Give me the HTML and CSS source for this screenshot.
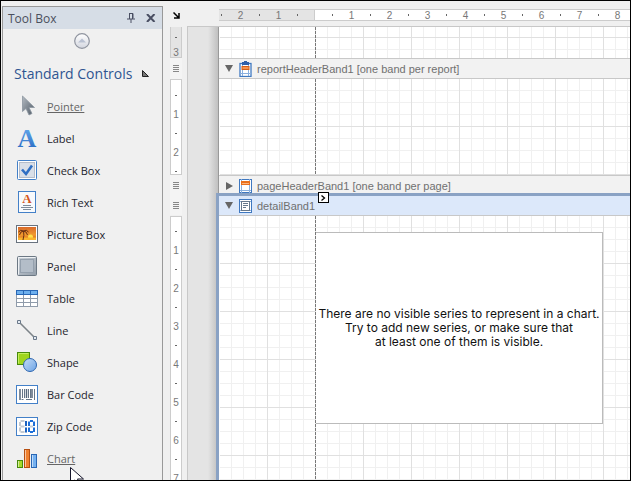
FILE: index.html
```
<!DOCTYPE html>
<html lang="en">
<head>
    <meta charset="UTF-8">
    <meta name="viewport" content="width=device-width, initial-scale=1">
    <title>Report Designer</title>
    <link rel="stylesheet" href="styles.css">
</head>
<body>
    <!-- Tool box -->
    <aside class="toolbox">
        <div class="toolbox-header">
            <span class="toolbox-title">Tool Box</span>
            <button class="icon-button" aria-label="Auto hide">
                <svg width="8" height="10" viewBox="0 0 8 10"><path d="M2 .5h4v5M2.500 0v6M0 6h8M4 6v4M5.500 1v5" fill="none" stroke="#4a4f63"/></svg>
            </button>
            <button class="icon-button" aria-label="Close">
                <svg width="10" height="8" viewBox="0 0 10 8"><path d="M1 0l7.500 8M8.500 0L1 8" fill="none" stroke="#4a4f63" stroke-width="2"/></svg>
            </button>
        </div>
        <button class="scroll-up" aria-label="Scroll up">
            <svg width="16" height="16" viewBox="0 0 16 16">
                <defs><linearGradient id="round" x2="0" y2="1"><stop offset="0" stop-color="#fff"/><stop offset="1" stop-color="#d3d6df"/></linearGradient></defs>
                <circle cx="8" cy="8" r="7.300" fill="url(#round)" stroke="#8f949f" stroke-width="1.200"/>
                <path d="M4 9.500L8 5.500l4 4z" fill="#b9c1d2"/>
            </svg>
        </button>
        <button class="group">
            <span>Standard Controls</span>
            <svg width="7" height="7" viewBox="0 0 7 7"><path d="M.5.5v6h6z" fill="#777" stroke="#222"/></svg>
        </button>
        <div class="tools">
            <button class="tool active">
                <svg class="tool-icon" viewBox="0 0 24 24">
                    <defs><linearGradient id="steel" x2="1" y2="1"><stop offset="0" stop-color="#b4bbc2"/><stop offset="1" stop-color="#4e5965"/></linearGradient></defs>
                    <path d="M7.500 2v15.500l3.500-3 3 6.500 3-1.500-3-6h5.500z" fill="url(#steel)" stroke="#8b959f" stroke-width=".8"/>
                </svg>
                <span>Pointer</span>
            </button>
            <button class="tool">
                <svg class="tool-icon" viewBox="0 0 24 24">
                    <defs><linearGradient id="blue" x2="0" y2="1"><stop offset="0" stop-color="#6fb2f2"/><stop offset="1" stop-color="#1f62bd"/></linearGradient></defs>
                    <text class="letter" x="12" y="21" font-size="26" text-anchor="middle" fill="url(#blue)">A</text>
                </svg>
                <span>Label</span>
            </button>
            <button class="tool">
                <svg class="tool-icon" viewBox="0 0 24 24">
                    <rect x="2.500" y="2.500" width="19" height="19" rx="1" fill="#fff" stroke="#4380c8"/>
                    <rect x="4.500" y="4.500" width="15" height="15" fill="#d9dfe8" stroke="#b5bdca"/>
                    <path d="M7 11.500l4 4.500 6-8.500" fill="none" stroke="#2f6fc4" stroke-width="2.600"/>
                </svg>
                <span>Check Box</span>
            </button>
            <button class="tool">
                <svg class="tool-icon" viewBox="0 0 24 24">
                    <rect x="3.500" y="1.500" width="17" height="21" fill="#f8fafc" stroke="#4380c8"/>
                    <text class="letter" x="12" y="13" font-size="13" text-anchor="middle" fill="#d4561c">A</text>
                    <path d="M8 15.500h8M6 17.500h12M8 19.500h8" stroke="#7e8c9b"/>
                </svg>
                <span>Rich Text</span>
            </button>
            <button class="tool">
                <svg class="tool-icon" viewBox="0 0 24 24">
                    <defs><linearGradient id="sunset" x2="0" y2="1"><stop offset="0" stop-color="#d9692a"/><stop offset=".6" stop-color="#f19a2e"/><stop offset="1" stop-color="#d6601d"/></linearGradient></defs>
                    <rect x="1.500" y="3.500" width="21" height="17" fill="#fff" stroke="#68727e"/>
                    <rect x="3" y="5" width="18" height="13" fill="url(#sunset)"/>
                    <circle cx="15.500" cy="15" r="2.500" fill="#ffe14a"/>
                    <path d="M3 15.500h18v2.500H3z" fill="#f9b52d"/>
                    <path d="M8 18q1.500-5 .5-9M8.500 9q-3-2-5 1M8.500 9q-3 0-4 4M8.500 9q3-2 5 1M8.500 9q3 0 4 4" fill="none" stroke="#693013"/>
                </svg>
                <span>Picture Box</span>
            </button>
            <button class="tool">
                <svg class="tool-icon" viewBox="0 0 24 24">
                    <defs><linearGradient id="plate" x2="1" y2="1"><stop offset="0" stop-color="#cbd2d9"/><stop offset="1" stop-color="#939eaa"/></linearGradient></defs>
                    <rect x="2.500" y="2.500" width="19" height="19" rx="1" fill="url(#plate)" stroke="#6c7884"/>
                    <path d="M3.500 20.500v-17h17" fill="none" stroke="#eef1f4"/>
                    <rect x="5.500" y="5.500" width="13" height="13" fill="#b3bdc8" stroke="#94a0ad"/>
                </svg>
                <span>Panel</span>
            </button>
            <button class="tool">
                <svg class="tool-icon" viewBox="0 0 24 24">
                    <rect x="1.500" y="4.500" width="21" height="16" fill="#fff" stroke="#8f9baa"/>
                    <path d="M1 12.500h22M1 16.500h22M8.500 8v12M15.500 8v12" stroke="#8f9baa"/>
                    <rect x="1.500" y="4.500" width="21" height="4" fill="#6eb0ee" stroke="#2867b5"/>
                    <path d="M8.500 4v5M15.500 4v5" stroke="#2867b5"/>
                </svg>
                <span>Table</span>
            </button>
            <button class="tool">
                <svg class="tool-icon" viewBox="0 0 24 24">
                    <path d="M4 4l16 16" stroke="#7c8388" stroke-width="1.600"/>
                    <path d="M2.500 2.500h3v3h-3zM18.500 18.500h3v3h-3z" fill="#e3eaf2" stroke="#6a7889"/>
                </svg>
                <span>Line</span>
            </button>
            <button class="tool">
                <svg class="tool-icon" viewBox="0 0 24 24">
                    <defs><linearGradient id="ball" x2="1" y2="1"><stop offset="0" stop-color="#c5dcf6"/><stop offset="1" stop-color="#6da4e6"/></linearGradient></defs>
                    <rect x="2.500" y="2.500" width="12" height="12" fill="#9fd51d" stroke="#478a0c"/>
                    <path d="M3.500 13.500v-10h10" fill="none" stroke="#c4ee5f"/>
                    <circle cx="15" cy="15" r="6.500" fill="url(#ball)" stroke="#2d66b0"/>
                </svg>
                <span>Shape</span>
            </button>
            <button class="tool">
                <svg class="tool-icon" viewBox="0 0 24 24">
                    <rect x="1.500" y="3.500" width="21" height="18" fill="#fff" stroke="#4380c8"/>
                    <path d="M5 7v11M11.500 7v9M17 7v9" stroke="#56677b" stroke-width="1.500"/>
                    <path d="M7.500 7v9M9.500 7v9M13.500 7v9M15.500 7v9M19.500 7v11M6.500 17.500h2M11 17.500h6" stroke="#56677b" stroke-width=".9"/>
                </svg>
                <span>Bar Code</span>
            </button>
            <button class="tool">
                <svg class="tool-icon" viewBox="0 0 24 24">
                    <rect x="1.500" y="3.500" width="21" height="18" fill="#fff" stroke="#4380c8"/>
                    <g fill="none" stroke-width="2">
                        <path d="M5.500 7h4M5.500 12.500h4M5.500 18h4M5 8v4M5 13.500v4" stroke="#c3cad2"/>
                        <path d="M11 7v5M11 13.500v5" stroke="#1c62c0"/>
                        <path d="M15 7h3M15 18h3M14 7.500v4.500M14 13.500v4.500M19 7.500v4.500M19 13.500v4.500" stroke="#1c6ed8"/>
                        <path d="M15 12.500h3" stroke="#c3cad2"/>
                    </g>
                </svg>
                <span>Zip Code</span>
            </button>
            <button class="tool active">
                <svg class="tool-icon" viewBox="0 0 24 24">
                    <rect x="2.500" y="14.500" width="5" height="7" fill="#a5d92b" stroke="#478a0c"/>
                    <rect x="9.500" y="3.500" width="5" height="18" fill="#f0812f" stroke="#b64f10"/>
                    <rect x="16.500" y="8.500" width="5" height="13" fill="#75b1f0" stroke="#2867b5"/>
                    <path d="M3.500 15v6M10.500 4v17M17.500 9v12" stroke="#fff" stroke-opacity=".55"/>
                </svg>
                <span>Chart</span>
            </button>
        </div>
    </aside>

    <!-- Design surface with rulers -->
    <main class="designer">
        <div class="corner">
            <svg width="7" height="7" viewBox="0 0 7 7"><path d="M.5.5l5 5M6 1v5H1" fill="none" stroke="#000" stroke-width="1.500"/></svg>
        </div>
        <div class="ruler-top">
            <div class="scale margin"><i></i><b>2</b><i></i><b>1</b><i></i></div>
            <div class="scale"><i></i><b>1</b><i></i><b>2</b><i></i><b>3</b><i></i><b>4</b><i></i><b>5</b><i></i><b>6</b><i></i><b>7</b><i></i><b>8</b></div>
        </div>
        <div class="ruler-side">
            <div class="scale margin"><i></i><b>3</b></div>
            <div class="grip"><span></span></div>
            <div class="scale header-scale"><i></i><b>1</b><i></i><b>2</b><i></i></div>
            <div class="grip"><span></span></div>
            <div class="grip"><span></span></div>
            <div class="scale detail-scale"><i></i><b>1</b><i></i><b>2</b><i></i><b>3</b><i></i><b>4</b><i></i><b>5</b><i></i><b>6</b><i></i><b>7</b></div>
        </div>
        <div class="canvas">
            <div class="page">
                <div class="surface top-margin"></div>
                <div class="band">
                    <svg width="8" height="7" viewBox="0 0 8 7"><path d="M0 0h8L4 7z" fill="#666"/></svg>
                    <svg width="13" height="16" viewBox="0 0 13 16">
                        <rect x="1" y="2.500" width="11" height="13" fill="#fff" stroke="#3f78c0" stroke-width="1.300"/>
                        <path d="M3.500 3v12M9.500 3v12M1 12.500h11" stroke="#8ab0df"/>
                        <rect x="3" y="5.500" width="7" height="3" fill="#f7924b" stroke="#d45f17"/>
                        <path d="M5 0h3v1h2v3H3V1h2z" fill="#2f5fa8"/>
                    </svg>
                    <span>reportHeaderBand1 [one band per report]</span>
                </div>
                <div class="surface report-header"></div>
                <div class="band collapsed">
                    <svg width="8" height="8" viewBox="0 0 8 8"><path d="M1 0l7 4-7 4z" fill="#666"/></svg>
                    <svg width="13" height="16" viewBox="0 0 13 16">
                        <rect x=".5" y="1.500" width="12" height="13" fill="#fff" stroke="#3f78c0"/>
                        <path d="M2.500 1v14M10.500 1v14M1 12.500h11" stroke="#8ab0df"/>
                        <rect x="2" y="3" width="9" height="4" fill="#e86f1c"/>
                        <path d="M3 5.500h7" stroke="#fbb27c"/>
                    </svg>
                    <span>pageHeaderBand1 [one band per page]</span>
                </div>
                <section class="detail">
                    <div class="band selected">
                        <svg width="8" height="7" viewBox="0 0 8 7"><path d="M0 0h8L4 7z" fill="#666"/></svg>
                        <svg width="13" height="16" viewBox="0 0 13 16">
                            <rect x=".5" y="1.500" width="12" height="13" fill="#fff" stroke="#3f78c0"/>
                            <path d="M1 3.500h11M1 12.500h11" stroke="#8ab0df"/>
                            <rect x="2.500" y="3.500" width="8" height="9" fill="#fff" stroke="#66788c"/>
                            <path d="M4 5.500h5M4 7.500h5M4 9.500h3" stroke="#66788c"/>
                        </svg>
                        <span>detailBand1</span>
                        <button class="smart-tag" aria-label="Tasks">
                            <svg width="5" height="6" viewBox="0 0 5 6"><path d="M.5.500L3.500 3l-3 2.500" fill="none" stroke="#000" stroke-width="1.300"/></svg>
                        </button>
                    </div>
                    <div class="surface detail-surface">
                        <div class="chart">
                            <p>There are no visible series to represent in a chart.<br>Try to add new series, or make sure that<br>at least one of them is visible.</p>
                        </div>
                    </div>
                </section>
            </div>
        </div>
    </main>

    <svg class="cursor" width="14" height="20" viewBox="0 0 14 20"><path d="M.5.5v16l4-3.500 3 6.500 3-1.500-3-6h6z" fill="#fff" stroke="#15152a"/></svg>
</body>
</html>
```
FILE: styles.css
```
* {
    box-sizing: border-box;
}

body {
    position: relative;
    display: flex;
    height: 100vh;
    margin: 0;
    overflow: hidden;
    border: 1px solid #000;
    background: #f0f0f0;
    font-family: "Liberation Sans", Arial, sans-serif;
    font-size: 11px;
}

button {
    padding: 0;
    border: 0;
    background: none;
    font: inherit;
    color: inherit;
    text-align: left;
}

svg {
    display: block;
    flex: none;
}

/* Tool box */
.toolbox {
    flex: none;
    width: 161px;
    margin: 5px 0 0 1px;
    overflow: hidden;
    border: 1px solid #999;
    border-bottom: 0;
    font-family: "Open Sans", "Noto Sans", sans-serif;
    color: #1e1e2d;
}

.toolbox-header {
    display: flex;
    align-items: center;
    gap: 11px;
    height: 22px;
    padding: 0 6px 0 5px;
    background: #d6dde6;
    color: #4a4f5c;
    font-size: 12px;
}

.toolbox-title {
    flex: 1;
}

.scroll-up {
    display: block;
    margin: 4px 0 0 71px;
}

.group {
    display: flex;
    align-items: center;
    justify-content: space-between;
    width: 100%;
    height: 32px;
    margin-top: 8px;
    padding: 0 13px 0 11px;
    font-size: 14px;
    color: #2f5590;
}

.tools {
    padding-top: 1px;
}

.tool {
    display: flex;
    align-items: center;
    gap: 8px;
    width: 100%;
    height: 32px;
    padding-left: 12px;
}

.tool.active {
    color: #666;
    text-decoration: underline;
}

.tool-icon {
    width: 24px;
    height: 24px;
    overflow: visible;
}

.letter {
    font-family: "Liberation Serif", serif;
    font-weight: bold;
}

/* Rulers */
.designer {
    flex: 1;
    display: grid;
    grid-template-columns: 12px 1fr;
    grid-template-rows: 12px 1fr;
    gap: 5px;
    min-width: 0;
    padding: 8px 0 0 7px;
}

.corner {
    display: flex;
    align-items: center;
    justify-content: center;
}

.ruler-top {
    display: flex;
    min-width: 0;
    margin-left: 32px;
}

.scale {
    display: flex;
    overflow: hidden;
    border: 1px solid #ccc;
    background: #fff;
    font-size: 10px;
    color: #777;
}

.scale.margin {
    background: #e4e4e4;
}

.scale i,
.scale b {
    display: flex;
    flex: none;
    align-items: center;
    justify-content: center;
    font-weight: normal;
}

.scale i::before {
    content: "";
    width: 1px;
    height: 2px;
    background: #666;
}

.ruler-top .scale {
    flex: 1;
    padding-left: 8px;
    border-left: 0;
    border-right: 0;
}

.ruler-top .scale.margin {
    flex: none;
    justify-content: flex-end;
    width: 96px;
    padding: 0 7px 0 0;
    border-right: 1px solid #ccc;
}

.ruler-top i,
.ruler-top b {
    width: 19px;
}

.ruler-side {
    display: flex;
    flex-direction: column;
    min-height: 0;
    padding-top: 1px;
}

.ruler-side .scale {
    flex-direction: column;
    padding-top: 6px;
}

.ruler-side .scale.margin {
    flex: none;
    justify-content: flex-end;
    height: 31px;
    padding: 0;
    border-top: 0;
}

.ruler-side i,
.ruler-side b {
    height: 19px;
}

.ruler-side .scale.margin b {
    height: 10px;
}

.ruler-side i::before {
    width: 2px;
    height: 1px;
}

.header-scale {
    flex: none;
    height: 96px;
}

.ruler-side .detail-scale {
    flex: 1;
    margin-top: 1px;
    padding-top: 5px;
    border-bottom: 0;
}

.grip {
    display: flex;
    flex: none;
    align-items: center;
    justify-content: center;
    height: 20px;
    background: #f4f4f4;
}

.scale.margin + .grip {
    height: 21px;
}

.grip span {
    width: 6px;
    height: 7px;
    background: repeating-linear-gradient(#888 0 1px, transparent 1px 2px);
}

/* Canvas */
.canvas {
    display: flex;
    min-width: 0;
    min-height: 0;
    padding-left: 20px;
    border-top: 1px solid #c8c8c8;
    border-left: 1px solid #c8c8c8;
    background: #e4e4e4;
}

.canvas::before {
    content: "";
    flex: none;
    width: 10px;
    background: linear-gradient(90deg, #e4e4e4, #c0c0c0);
}

.page {
    flex: 1;
    display: flex;
    flex-direction: column;
    min-width: 0;
    border-left: 1px solid #999;
    background: #fff;
}

.surface {
    position: relative;
    flex: none;
    border-left: 1px solid #fff;
    background-color: #fff;
    background-image:
        linear-gradient(90deg, #e0e0e0 1px, transparent 1px),
        linear-gradient(0deg, #e0e0e0 1px, transparent 1px),
        linear-gradient(90deg, #f0f0f0 1px, transparent 1px),
        linear-gradient(0deg, #f0f0f0 1px, transparent 1px);
    background-size: 48px 48px, 48px 48px, 12px 12px, 12px 12px;
    background-position: -1px 0;
}

/* Page margin guide */
.surface::after {
    content: "";
    position: absolute;
    top: 0;
    bottom: 0;
    left: 95px;
    width: 1px;
    background: repeating-linear-gradient(#777 0 3px, #e8e8e8 3px 4px);
}

.top-margin {
    height: 31px;
    background-position: -1px 11px;
}

.report-header {
    height: 96px;
}

.band {
    position: relative;
    display: flex;
    flex: none;
    align-items: center;
    height: 21px;
    padding-left: 6px;
    border-top: 1px solid #c8c8c8;
    border-bottom: 1px solid #c8c8c8;
    background: #f2f2f2;
    color: #707070;
}

.band svg + svg {
    margin: 0 5px 0 6px;
}

.band.collapsed {
    height: 18px;
    padding-top: 2px;
    border-bottom: 0;
}

.detail {
    flex: 1;
    display: flex;
    flex-direction: column;
    min-height: 0;
    margin-left: -3px;
    border-left: 3px solid #8aa2c4;
}

.band.selected {
    height: 23px;
    border-top: 3px solid #8aa2c4;
    background: #dce8fa;
}

.smart-tag {
    position: absolute;
    top: -4px;
    left: 99px;
    display: flex;
    align-items: center;
    justify-content: center;
    width: 11px;
    height: 11px;
    border: 1px solid #000;
    background: #fff;
}

.detail-surface {
    flex: 1;
    padding: 16px 27px 0 95px;
}

.chart {
    display: flex;
    align-items: center;
    justify-content: center;
    height: 192px;
    border: 1px solid #bbb;
    background: #fff;
    color: #111;
    text-align: center;
}

.chart p {
    margin: 0;
    font-family: Inter, "Liberation Sans", sans-serif;
    font-size: 12px;
    line-height: 14px;
    white-space: nowrap;
}

.cursor {
    position: absolute;
    left: 69px;
    top: 466px;
}
```
